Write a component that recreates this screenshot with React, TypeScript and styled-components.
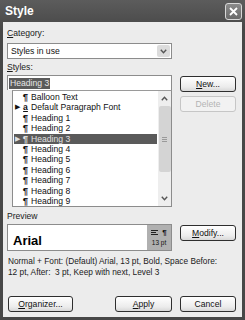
import React from 'react'
import styled, { createGlobalStyle } from 'styled-components'

const GlobalStyle = createGlobalStyle`
  html, body {
    margin: 0;
    padding: 0;
    background: #3a3a3a;
  }
  body {
    font-family: 'Liberation Sans', Arial, sans-serif;
  }
`

const StyledWindow = styled.div`
  width: 245px;
  height: 320px;
  box-sizing: border-box;
  display: flex;
  flex-direction: column;
  background: linear-gradient(#5c5c5c, #474747 30px);
  padding: 0 3px 3px 3px;
`

const StyledTitleBar = styled.div`
  height: 22px;
  display: flex;
  align-items: center;
  justify-content: space-between;
  padding: 0 0 0 2px;
`

const StyledTitle = styled.div`
  color: #ffffff;
  font-weight: bold;
  font-size: 12px;
  user-select: none;
`

const StyledClose = styled.div`
  width: 15px;
  height: 15px;
  border: 1px solid #d8d8d8;
  border-radius: 3px;
  background: linear-gradient(#8a8a8a, #6a6a6a);
  display: flex;
  align-items: center;
  justify-content: center;
`

const StyledBody = styled.div`
  flex: 1;
  background: #ececec;
  padding: 5px 6px 0 4px;
  display: flex;
  flex-direction: column;
  font-size: 8.6px;
  color: #111;
`

const StyledLabel = styled.div<{ $top?: number }>`
  height: 11px;
  line-height: 11px;
  margin-top: ${(props) => props.$top ?? 0}px;
  color: #1a1a1a;
`

const StyledCombo = styled.div`
  width: 165px;
  height: 16px;
  box-sizing: border-box;
  margin-top: 4px;
  border: 1px solid #8c8c8c;
  background: #fff;
  display: flex;
  align-items: center;
  justify-content: space-between;
  padding: 0 1px 0 3px;
`

const StyledComboArrow = styled.div`
  width: 13px;
  height: 12px;
  background: #dcdcdc;
  border-radius: 2px;
  display: flex;
  align-items: center;
  justify-content: center;
`

const StyledGrid = styled.div`
  display: grid;
  grid-template-columns: 165px 56px;
  column-gap: 8px;
  margin-top: 2px;
`

const StyledColumn = styled.div`
  display: flex;
  flex-direction: column;
`

const StyledButtonStack = styled.div<{ $top: number }>`
  display: flex;
  flex-direction: column;
  gap: 4px;
  padding-top: ${(props) => props.$top}px;
`

const StyledButton = styled.div<{ $width?: number; $disabled?: boolean }>`
  width: ${(props) => props.$width ?? 56}px;
  height: 16px;
  box-sizing: border-box;
  border: 1px solid ${(props) => (props.$disabled ? '#c6c6c6' : '#2e2e2e')};
  border-radius: 3px;
  background: ${(props) =>
    props.$disabled ? '#f2f2f2' : 'linear-gradient(#ffffff, #ececec 70%, #d8d8d8)'};
  color: ${(props) => (props.$disabled ? '#b4b4b4' : '#111')};
  display: flex;
  align-items: center;
  justify-content: center;
  font-size: 8.6px;
`

const StyledTextField = styled.div`
  height: 15px;
  box-sizing: border-box;
  border: 1px solid #8c8c8c;
  border-bottom: none;
  background: #fff;
  display: flex;
  align-items: center;
  padding: 0 1px;
`

const StyledSelection = styled.span`
  background: #5a5a5a;
  color: #e6e6e6;
  padding: 0 1px;
  line-height: 11px;
`

const StyledList = styled.div`
  margin-left: 5px;
  height: 117px;
  box-sizing: border-box;
  border: 1px solid #8c8c8c;
  border-top: 1px solid #9a9a9a;
  background: #fff;
  display: flex;
`

const StyledRows = styled.div`
  flex: 1;
  padding: 1px 1px 0 1px;
`

const StyledRow = styled.div<{ $selected?: boolean }>`
  height: 10.4px;
  line-height: 10.4px;
  display: flex;
  align-items: center;
  background: ${(props) => (props.$selected ? '#5a5a5a' : 'transparent')};
  color: ${(props) => (props.$selected ? '#e0e0e0' : '#111')};
  white-space: nowrap;
`

const StyledMarker = styled.span`
  width: 7px;
  font-size: 7px;
  text-align: center;
`

const StyledKind = styled.span<{ $char?: boolean }>`
  width: 9px;
  font-weight: bold;
  font-size: ${(props) => (props.$char ? 8.6 : 9.6)}px;
  text-align: center;
  text-decoration: ${(props) => (props.$char ? 'underline' : 'none')};
  margin-right: 1px;
`

const StyledScrollbar = styled.div`
  width: 13px;
  background: #eeeeee;
  display: flex;
  flex-direction: column;
  align-items: center;
  padding: 2px 0;
`

const StyledScrollArrow = styled.div`
  height: 11px;
  width: 13px;
  display: flex;
  align-items: center;
  justify-content: center;
`

const StyledScrollTrack = styled.div`
  flex: 1;
  width: 13px;
  display: flex;
  flex-direction: column;
  align-items: center;
  padding-top: 2px;
`

const StyledThumb = styled.div`
  width: 12px;
  height: 66px;
  background: #d4d4d4;
  border-radius: 2px;
  display: flex;
  flex-direction: column;
  align-items: center;
  justify-content: center;
  gap: 1px;
`

const StyledGrip = styled.div`
  width: 5px;
  height: 1px;
  background: #9a9a9a;
`

const StyledPreviewRow = styled.div`
  display: grid;
  grid-template-columns: 165px 56px;
  column-gap: 8px;
  margin-top: 2px;
`

const StyledPreview = styled.div`
  height: 27px;
  box-sizing: border-box;
  border: 1px solid #8c8c8c;
  background: #fff;
  display: flex;
`

const StyledPreviewText = styled.div`
  flex: 1;
  font-weight: bold;
  font-size: 13px;
  color: #000;
  padding: 8px 0 0 5px;
`

const StyledPreviewInfo = styled.div`
  width: 24px;
  background: #b0b0b0;
  display: flex;
  flex-direction: column;
  align-items: center;
  padding-top: 3px;
  gap: 2px;
`

const StyledInfoIcons = styled.div`
  display: flex;
  align-items: center;
  gap: 4px;
  font-weight: bold;
  font-size: 8px;
  color: #111;
`

const StyledInfoSize = styled.div`
  font-size: 6.5px;
  color: #111;
`

const StyledDescription = styled.div`
  margin-top: 5px;
  line-height: 10.5px;
  font-size: 8.3px;
  color: #1a1a1a;
  padding-left: 1px;
`

const StyledFooter = styled.div`
  margin-top: auto;
  margin-bottom: 5px;
  display: flex;
  align-items: center;
  padding-left: 1px;
`

const StyledFooterRight = styled.div`
  margin-left: auto;
  display: flex;
  gap: 8px;
`

const Key = styled.span`
  text-decoration: underline;
`

const styleNames = [
  { name: 'Balloon Text' },
  { name: 'Default Paragraph Font', char: true, marker: true },
  { name: 'Heading 1' },
  { name: 'Heading 2' },
  { name: 'Heading 3', marker: true, selected: true },
  { name: 'Heading 4' },
  { name: 'Heading 5' },
  { name: 'Heading 6' },
  { name: 'Heading 7' },
  { name: 'Heading 8' },
  { name: 'Heading 9' },
]

const Chevron = ({ up }: { up?: boolean }) => (
  <svg width="7" height="5" viewBox="0 0 7 5">
    <path
      d={up ? 'M0.8 4.2 L3.5 1.3 L6.2 4.2' : 'M0.8 0.8 L3.5 3.7 L6.2 0.8'}
      stroke="#555"
      strokeWidth="1.4"
      fill="none"
    />
  </svg>
)

const App = () => {
  return (
    <>
      <GlobalStyle />
      <StyledWindow>
        <StyledTitleBar>
          <StyledTitle>Style</StyledTitle>
          <StyledClose>
            <svg width="9" height="9" viewBox="0 0 9 9">
              <path d="M1 1 L8 8 M8 1 L1 8" stroke="#fff" strokeWidth="1.8" />
            </svg>
          </StyledClose>
        </StyledTitleBar>
        <StyledBody>
          <StyledLabel $top={1}>
            <Key>C</Key>ategory:
          </StyledLabel>
          <StyledCombo>
            <span>Styles in use</span>
            <StyledComboArrow>
              <Chevron />
            </StyledComboArrow>
          </StyledCombo>
          <StyledLabel $top={3}>
            <Key>S</Key>tyles:
          </StyledLabel>
          <StyledGrid>
            <StyledColumn>
              <StyledTextField>
                <StyledSelection>Heading 3</StyledSelection>
              </StyledTextField>
              <StyledList>
                <StyledRows>
                  {styleNames.map((item) => (
                    <StyledRow key={item.name} $selected={item.selected}>
                      <StyledMarker>{item.marker ? '▶' : ''}</StyledMarker>
                      <StyledKind $char={item.char}>{item.char ? 'a' : '¶'}</StyledKind>
                      {item.name}
                    </StyledRow>
                  ))}
                </StyledRows>
                <StyledScrollbar>
                  <StyledScrollArrow>
                    <Chevron up />
                  </StyledScrollArrow>
                  <StyledScrollTrack>
                    <StyledThumb>
                      <StyledGrip />
                      <StyledGrip />
                      <StyledGrip />
                    </StyledThumb>
                  </StyledScrollTrack>
                  <StyledScrollArrow>
                    <Chevron />
                  </StyledScrollArrow>
                </StyledScrollbar>
              </StyledList>
            </StyledColumn>
            <StyledButtonStack $top={1}>
              <StyledButton>
                <Key>N</Key>ew...
              </StyledButton>
              <StyledButton $disabled>Delete</StyledButton>
            </StyledButtonStack>
          </StyledGrid>
          <StyledLabel $top={4}>Preview</StyledLabel>
          <StyledPreviewRow>
            <StyledPreview>
              <StyledPreviewText>Arial</StyledPreviewText>
              <StyledPreviewInfo>
                <StyledInfoIcons>
                  <svg width="7" height="6" viewBox="0 0 7 6">
                    <path d="M0 0.5 H7 M0 2.5 H5 M0 4.5 H7" stroke="#222" strokeWidth="1" />
                  </svg>
                  <span>¶</span>
                </StyledInfoIcons>
                <StyledInfoSize>13 pt</StyledInfoSize>
              </StyledPreviewInfo>
            </StyledPreview>
            <StyledButtonStack $top={1}>
              <StyledButton>
                <Key>M</Key>odify...
              </StyledButton>
            </StyledButtonStack>
          </StyledPreviewRow>
          <StyledDescription>
            Normal + Font: (Default) Arial, 13 pt, Bold, Space Before:
            <br />
            12 pt, After:&nbsp; 3 pt, Keep with next, Level 3
          </StyledDescription>
          <StyledFooter>
            <StyledButton $width={65}>
              <Key>O</Key>rganizer...
            </StyledButton>
            <StyledFooterRight>
              <StyledButton $width={57}>
                <Key>A</Key>pply
              </StyledButton>
              <StyledButton>Cancel</StyledButton>
            </StyledFooterRight>
          </StyledFooter>
        </StyledBody>
      </StyledWindow>
    </>
  )
}

export default App
